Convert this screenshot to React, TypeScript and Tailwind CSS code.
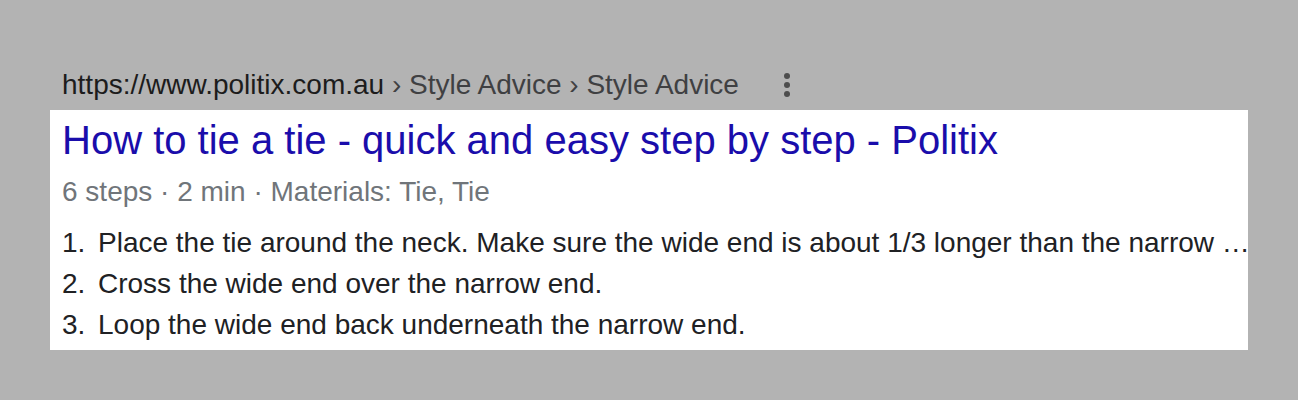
const steps = [
  'Place the tie around the neck. Make sure the wide end is about 1/3 longer than the narrow …',
  'Cross the wide end over the narrow end.',
  'Loop the wide end back underneath the narrow end.',
];

function MoreIcon() {
  return (
    <svg width="24" height="30" viewBox="0 0 24 30" fill="#4d4d4d">
      <circle cx="12" cy="6" r="3" />
      <circle cx="12" cy="15" r="3" />
      <circle cx="12" cy="24" r="3" />
    </svg>
  );
}

export default function App() {
  return (
    <div className="min-h-[400px] bg-[#b3b3b3] px-[50px] pt-[67px] font-['Liberation_Sans',Arial,sans-serif]">
      {/* breadcrumb url */}
      <div className="flex items-center pl-3 h-[36px] text-[28px] leading-[36px]">
        <span className="text-[#1c1c1c]">https://www.politix.com.au</span>
        <span className="text-[#3f4042]">&nbsp;› Style Advice › Style Advice</span>
        <span className="ml-[36px] flex items-center">
          <MoreIcon />
        </span>
      </div>

      <div className="mt-[7px] h-[240px] w-[1198px] bg-white pl-3 pr-[3px] pt-[6px]">
        <h3 className="text-[40px] leading-[48px] text-[#1a0dab]">
          How to tie a tie - quick and easy step by step - Politix
        </h3>
        <div className="mt-[10px] text-[28px] leading-[36px] text-[#70757a]">
          6 steps · 2 min · Materials: Tie, Tie
        </div>
        <ol className="mt-[13px] flex flex-col gap-px text-[28px] leading-[40px] text-[#202124]">
          {steps.map((s, i) => (
            <li key={i} className="flex">
              <span className="w-[36px] shrink-0">{i + 1}.</span>
              <span className="whitespace-nowrap">{s}</span>
            </li>
          ))}
        </ol>
      </div>
    </div>
  );
}
